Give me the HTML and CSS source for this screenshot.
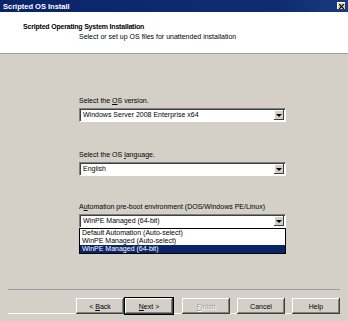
FILE: index.html
```html
<!DOCTYPE html>
<html lang="en">
<head>
    <meta charset="UTF-8">
    <title>Scripted OS Install</title>
    <link rel="stylesheet" href="styles.css">
</head>
<body>
    <div class="window">
        <div class="titlebar">
            <span class="title">Scripted OS Install</span>
            <span class="close">
                <svg width="5" height="5" viewBox="0 0 5 5"><path d="M0 0L5 5M5 0L0 5" stroke="#000" stroke-width="1.2"/></svg>
            </span>
        </div>
        <div class="header">
            <div class="header-title">Scripted Operating System Installation</div>
            <div class="header-sub">Select or set up OS files for unattended installation</div>
        </div>
        <div class="content">
            <div class="field field-version">
                <label>Select the <u>O</u>S version.</label>
                <div class="combo">
                    <span class="combo-text">Windows Server 2008 Enterprise x64</span>
                    <span class="combo-btn"><span class="arrow"></span></span>
                </div>
            </div>
            <div class="field field-lang">
                <label>Select the OS <u>l</u>anguage.</label>
                <div class="combo">
                    <span class="combo-text">English</span>
                    <span class="combo-btn"><span class="arrow"></span></span>
                </div>
            </div>
            <div class="field field-env">
                <label>A<u>u</u>tomation pre-boot environment (DOS/Windows PE/Linux)</label>
                <div class="combo open">
                    <span class="combo-text">WinPE Managed (64-bit)</span>
                    <span class="combo-btn"><span class="arrow"></span></span>
                    <ul class="combo-list">
                        <li>Default Automation (Auto-select)</li>
                        <li>WinPE Managed (Auto-select)</li>
                        <li class="selected">WinPE Managed (64-bit)</li>
                    </ul>
                </div>
            </div>
        </div>
        <div class="footer">
            <div class="buttons">
                <button>&lt; <u>B</u>ack</button>
                <button class="default"><u>N</u>ext &gt;</button>
                <button class="disabled" disabled><u>F</u>inish</button>
                <button class="spaced">Cancel</button>
                <button class="spaced">Help</button>
            </div>
        </div>
    </div>
</body>
</html>
```

FILE: styles.css
```css
html, body {
    margin: 0;
    padding: 0;
}

body {
    font-family: "Liberation Sans", Arial, sans-serif;
    font-size: 7px;
    color: #000;
    background: #d4d0c8;
}

.window {
    width: 348px;
    height: 321px;
    display: flex;
    flex-direction: column;
    background: #d4d0c8;
    overflow: hidden;
}

.titlebar {
    height: 12px;
    background: linear-gradient(to right, #0a246a, #0f2c72 80%, #1a3a80);
    color: #fff;
    display: flex;
    align-items: center;
    justify-content: space-between;
    padding: 0 2px 0 3px;
}

.title {
    font-weight: bold;
    font-size: 7.5px;
}

.close {
    width: 9px;
    height: 8px;
    background: #d4d0c8;
    box-shadow: inset -1px -1px #404040, inset 1px 1px #fff;
    display: flex;
    align-items: center;
    justify-content: center;
}

.close svg {
    display: block;
}

.header {
    height: 42px;
    background: #fff;
    border-bottom: 1px solid #a0a0a0;
    box-sizing: border-box;
    padding: 10px 0 0 23px;
}

.header-title {
    font-weight: bold;
    line-height: 9px;
    letter-spacing: -0.2px;
}

.header-sub {
    margin: 1px 0 0 56px;
    line-height: 9px;
}

.content {
    flex: 1;
    padding: 42px 0 0 79px;
}

.field label {
    display: block;
    line-height: 9px;
    height: 9px;
    margin-bottom: 3px;
}

.field-lang {
    margin-top: 28px;
}

.field-env {
    margin-top: 26px;
}

.combo {
    position: relative;
    width: 207px;
    height: 14px;
    box-sizing: border-box;
    background: #fff;
    border: 1px solid;
    border-color: #808080 #fff #fff #808080;
    box-shadow: inset 1px 1px #404040;
    display: flex;
    align-items: center;
}

.combo-text {
    flex: 1;
    padding-left: 3px;
    line-height: 10px;
}

.combo-btn {
    width: 10px;
    height: 10px;
    margin-right: 1px;
    background: #d4d0c8;
    box-shadow: inset -1px -1px #404040, inset 1px 1px #fff;
    display: flex;
    align-items: center;
    justify-content: center;
}

.arrow {
    width: 0;
    height: 0;
    border-left: 3px solid transparent;
    border-right: 3px solid transparent;
    border-top: 3px solid #000;
}

.combo-list {
    position: absolute;
    left: -1px;
    top: 13px;
    width: 207px;
    margin: 0;
    padding: 0;
    list-style: none;
    background: #fff;
    border: 1px solid #000;
    box-sizing: border-box;
}

.combo-list li {
    height: 8px;
    line-height: 8px;
    padding-left: 2px;
}

.combo-list li.selected {
    background: #0a246a;
    color: #fff;
}

.footer {
    padding: 0 8px 7px 8px;
}

.buttons {
    border-top: 1px solid #a0a0a0;
    box-shadow: 0 -1px #fff inset;
    padding-top: 8px;
    display: flex;
    justify-content: flex-end;
}

.buttons button {
    width: 48px;
    height: 16px;
    padding: 0;
    font-family: "Liberation Sans", Arial, sans-serif;
    font-size: 7px;
    color: #000;
    background: #d4d0c8;
    border: none;
    box-shadow: inset -1px -1px #404040, inset 1px 1px #fff, inset -2px -2px #808080;
}

.buttons button.default {
    box-shadow: 0 0 0 1px #000, inset -1px -1px #404040, inset 1px 1px #fff, inset -2px -2px #808080;
    margin-left: 1px;
}

.buttons button.disabled {
    color: #a0a0a0;
    text-shadow: 1px 1px #fff;
    margin-left: 9px;
}

.buttons button.spaced {
    margin-left: 7px;
}
```
